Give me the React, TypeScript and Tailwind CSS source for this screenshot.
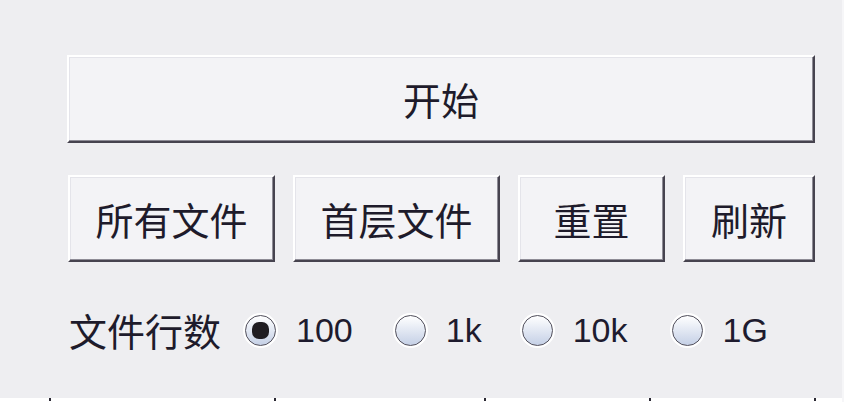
import React from "react";

const cjk = { fontFamily: '"Noto Sans CJK SC", "Noto Sans", sans-serif' };
const latin = { fontFamily: '"Liberation Sans", Arial, sans-serif' };

const btn =
  "flex items-center justify-center bg-[#f3f3f6] border-2 border-t-white border-l-white border-b-[#46434f] border-r-[#46434f] shadow-[inset_-1px_-1px_0_#8e8c96,inset_1px_1px_0_#e4e4ea] text-[38px] leading-none text-[#1e1b2b]";

const Radio = ({ checked }: { checked?: boolean }) => (
  <span className="flex items-center justify-center w-[31px] h-[31px] rounded-full border-[1.5px] border-[#55535f] bg-gradient-to-b from-white to-[#c5d0e6] shadow-[0_0_0_2px_#ffffff]">
    {checked && <span className="w-[17px] h-[17px] rounded-[7px] bg-[#1f1d22]" />}
  </span>
);

const Option = ({ label, checked }: { label: string; checked?: boolean }) => (
  <div className="flex items-center gap-[20px]">
    <Radio checked={checked} />
    <span style={latin} className="text-[34px] leading-none text-[#1e1b2e]">
      {label}
    </span>
  </div>
);

export default function App() {
  return (
    <div className="w-[844px] h-[402px] overflow-hidden bg-[#eeeef1] border-r-2 border-r-[#f6f6f8] flex flex-col" style={cjk}>
      <div className="pl-[67px] pt-[55px] flex flex-col">
        <button className={`${btn} w-[748px] h-[88px]`}>开始</button>

        <div className="flex gap-[18px] mt-[32px] ml-[1px]">
          <button className={`${btn} w-[207px] h-[87px]`}>所有文件</button>
          <button className={`${btn} w-[207px] h-[87px]`}>首层文件</button>
          <button className={`${btn} w-[147px] h-[87px]`}>重置</button>
          <button className={`${btn} w-[132px] h-[87px]`}>刷新</button>
        </div>

        <div className="flex items-center mt-[48px] h-[40px] ml-[2px]">
          <span className="text-[38px] leading-none text-[#1e1b2b] mr-[24px]">文件行数</span>
          <Option label="100" checked />
          <div className="ml-[42px]">
            <Option label="1k" />
          </div>
          <div className="ml-[40px]">
            <Option label="10k" />
          </div>
          <div className="ml-[44px]">
            <Option label="1G" />
          </div>
        </div>
      </div>

      <div className="mt-auto h-[4px] bg-white flex">
        <span className="ml-[49px] w-[2px] h-[3px] bg-[#2a2833]" />
        <span className="ml-[223px] w-[2px] h-[3px] bg-[#2a2833]" />
        <span className="ml-[208px] w-[2px] h-[3px] bg-[#2a2833]" />
        <span className="ml-[163px] w-[2px] h-[3px] bg-[#2a2833]" />
        <span className="ml-[163px] w-[2px] h-[3px] bg-[#2a2833]" />
      </div>
    </div>
  );
}
